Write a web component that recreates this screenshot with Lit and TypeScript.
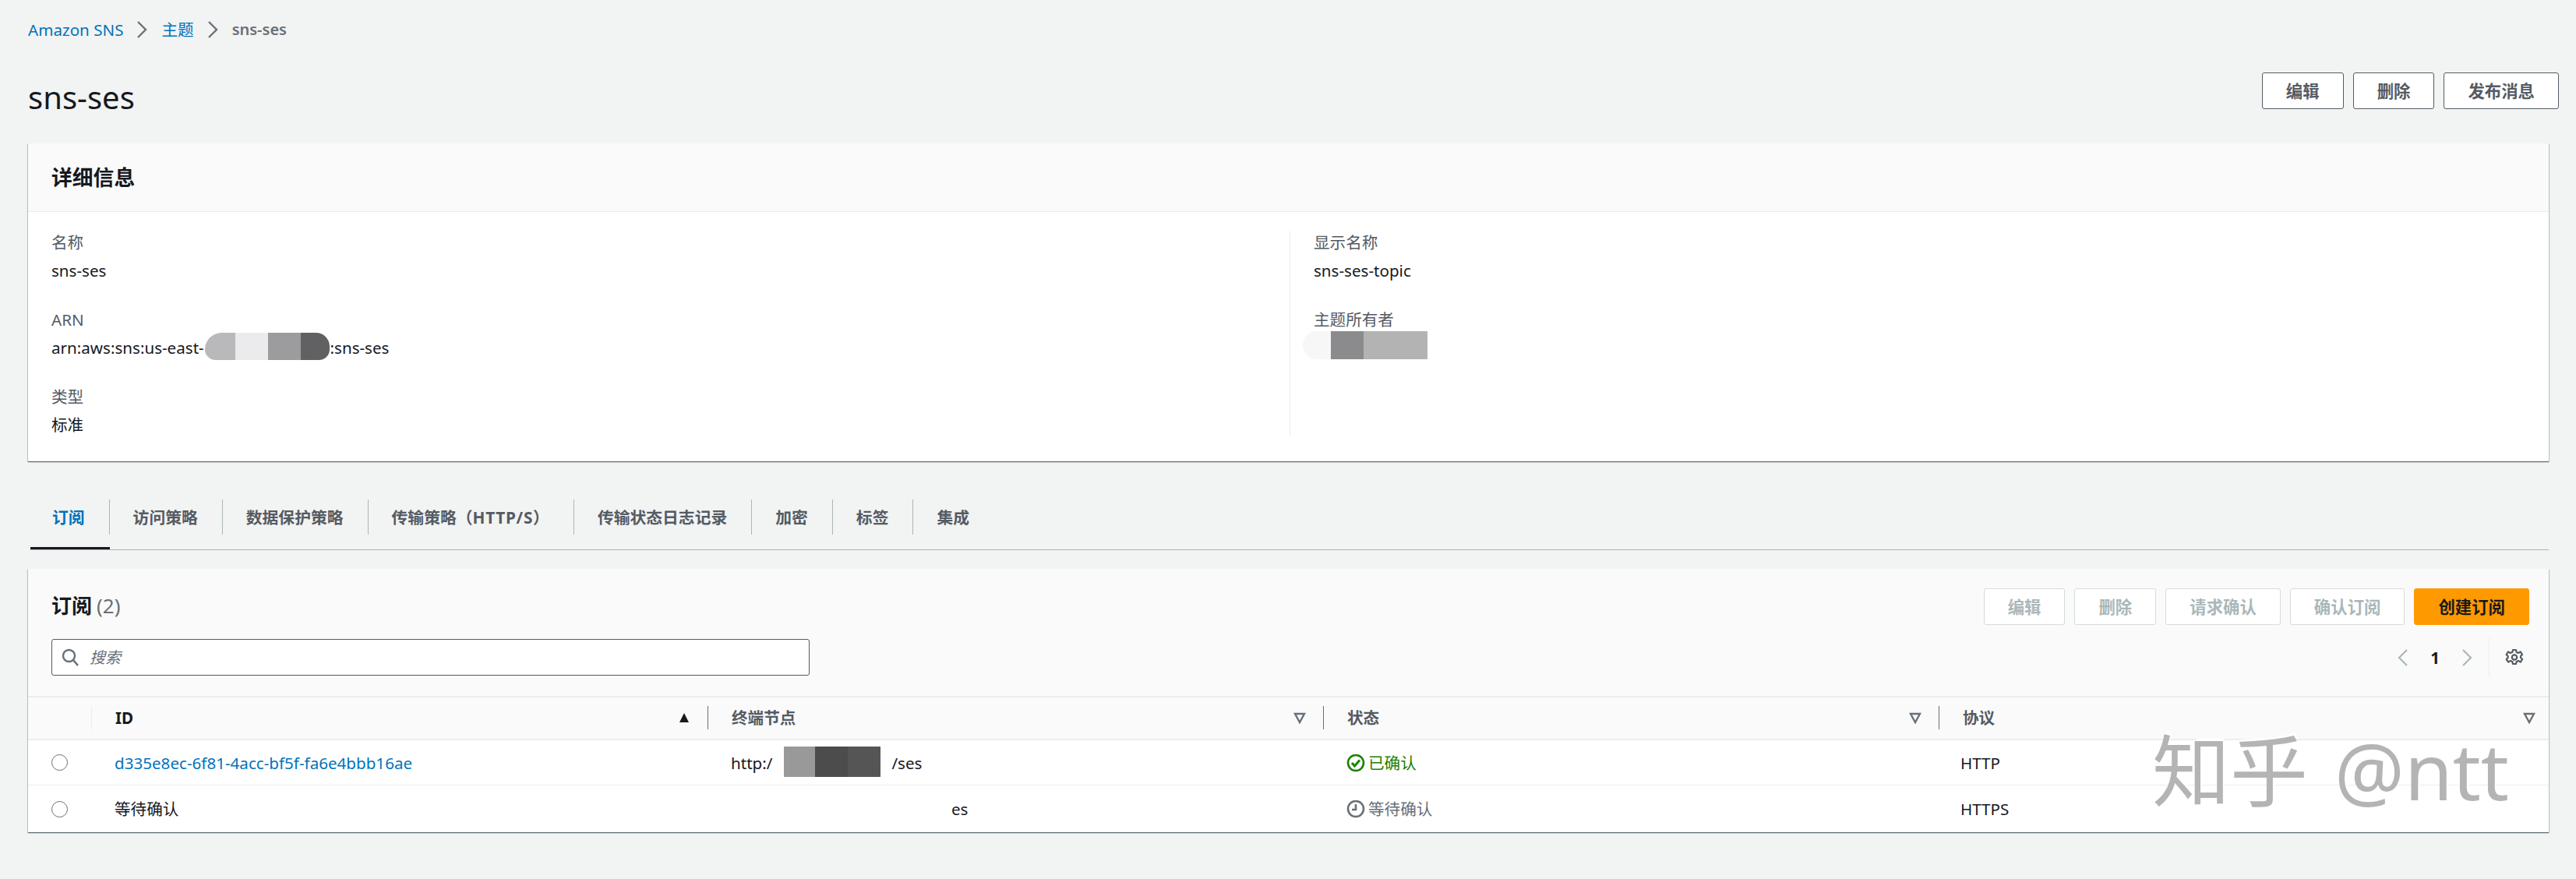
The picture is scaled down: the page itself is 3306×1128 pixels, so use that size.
import { LitElement, html, css, svg } from "lit";
import { customElement } from "lit/decorators.js";

const blobs = [
  { x: 263, y: 427, w: 160, h: 35, r: "22px 18px 14px 14px", segs: [["#b9b9bb", 39], ["#ebebed", 42], ["#9c9c9e", 42], ["#616163", 37]] },
  { x: 1672, y: 425, w: 160, h: 36, r: "20px 0 0 20px", segs: [["#f7f7f7", 36], ["#8b8b8d", 42], ["#b3b3b3", 82]] },
  { x: 1006, y: 958, w: 124, h: 39, r: "0", segs: [["#999999", 40], ["#4c4c4c", 42], ["#555555", 42]] },
];

const chevron = svg`<svg class="chev" viewBox="0 0 14 22" width="14" height="22"><path d="M2 1l10 10L2 21" fill="none" stroke="currentColor" stroke-width="2.4"/></svg>`;

@customElement("app-root")
export class AppRoot extends LitElement {
  static styles = css`
    :host {
      display: block; position: relative; width: 3306px; height: 1128px; overflow: hidden;
      background: #f2f3f3; color: #16191f;
      font: 20.6px/30px "Noto Sans", "Noto Sans CJK SC", sans-serif;
    }
    * { box-sizing: border-box; }
    .page { padding: 24px 22px 0 36px; }
    .crumbs { display: flex; align-items: center; height: 28px; color: #687078; }
    .crumbs a { color: #0073bb; }
    .crumbs .chev { margin: 0 18px 0 17px; color: #687078; }
    .crumbs .cur { font-weight: 600; font-size: 20px; }
    .head { display: flex; justify-content: space-between; align-items: flex-start; margin-top: 41px; height: 91px; }
    h1 { margin: 8px 0 0; font-size: 40px; line-height: 48px; font-weight: 400; }
    .btns { display: flex; gap: 12px; }
    .btn {
      height: 47px; padding: 0 30px; display: flex; align-items: center; border: 1px solid #545b64;
      border-radius: 3px; background: #fff; color: #545b64; font-weight: 700; font-size: 21.4px; white-space: nowrap;
    }
    .btn.off { border-color: #d5dbdb; color: #aab7b8; }
    .btn.primary { background: #ff9900; border-color: #ff9900; color: #16191f; }
    .card {
      margin-right: 13px; background: #fff;
      box-shadow: 0 1px 1px 0 rgba(0,28,36,.5), 1px 1px 1px 0 rgba(0,28,36,.15), -1px 1px 1px 0 rgba(0,28,36,.15);
    }
    .card-head {
      height: 88px; padding: 0 30px; display: flex; align-items: center; background: #fafafa;
      border-bottom: 1px solid #eaeded; font-size: 26.8px; font-weight: 700;
    }
    .details { display: grid; grid-template-columns: 1620px 1fr; padding: 24px 0 32px; }
    .col { padding: 0 30px; height: 264px; }
    .col.first { border-right: 1px solid #eaeded; }
    .field { height: 99px; }
    .lab { color: #545b64; height: 36px; }
    .val { height: 30px; white-space: nowrap; }
    .gap-arn { display: inline-block; width: 150px; }
    .tabs { display: flex; margin: 39px 13px 24px 3px; border-bottom: 1px solid #aab7b8; }
    .tab { padding-top: 10px; border-bottom: 3px solid transparent; font-weight: 700; font-size: 20.8px; color: #545b64; white-space: nowrap; }
    .tab.on { border-bottom-color: #16191f; color: #0073bb; }
    .tab > span { display: flex; align-items: center; height: 45px; padding: 0 31px 0 30px; border-right: 1px solid #aab7b8; margin-bottom: 16px; }
    .tab.on > span { padding-left: 28px; }
    .tab.last > span { border-right: 0; }
    .ls { letter-spacing: 0.7px; }
    .sub { background: #fafafa; padding-top: 25px; }
    .sub-top { display: flex; justify-content: space-between; align-items: center; padding: 0 25px 0 30px; }
    .sub-title { font-size: 26px; font-weight: 700; line-height: 46px; margin-top: -3px; }
    .sub-title i { font-style: normal; font-weight: 400; color: #687078; font-size: 26px; margin-left: 6px; }
    .tools { display: flex; justify-content: space-between; align-items: center; padding: 18px 25px 0 30px; height: 65px; margin-bottom: 26px; }
    .search {
      width: 973px; height: 47px; border: 1px solid #545b64; border-radius: 3px; background: #fff;
      display: flex; align-items: center; gap: 14px; padding-left: 12px; color: #687078; font-style: italic; font-size: 20px;
    }
    .pager { display: flex; align-items: center; height: 50px; color: #aab7b8; }
    .pager b { color: #16191f; font-weight: 700; margin: 0 28px; }
    .pager .gearbox { margin-left: 21px; padding: 0 7px 0 20px; border-left: 1px solid #eaeded; height: 50px; display: flex; align-items: center; color: #545b64; }
    .row { display: grid; grid-template-columns: 81px 791px 790px 790px 783px; }
    .row.th { height: 57px; background: #fafafa; border-top: 2px solid #eaeded; border-bottom: 2px solid #eaeded; font-weight: 700; color: #545b64; }
    .row.tr { background: #fff; height: 58px; border-bottom: 1px solid #eaeded; align-items: center; }
    .row.tr.end { height: 60px; border-bottom: 0; }
    .th > div { display: flex; align-items: center; justify-content: space-between; padding: 0 22px 0 30px; position: relative; }
    .th > div:last-child { padding-right: 17px; }
    .th > div.idc { color: #16191f; }
    .th > div:not(.blank) { border-left: 1px solid #687078; margin: 11px 0 12px; }
    .th > div.idc { border-left-color: #eaeded; }
    .tr > div { padding-left: 30px; white-space: nowrap; }
    .tr > div.proto { padding-left: 28px; }
    .tr > div.r { padding-left: 0; display: flex; justify-content: center; }
    .radio { width: 21px; height: 21px; border-radius: 50%; border: 1.5px solid #687078; background: #fff; }
    .link { color: #0073bb; }
    .gap-ep { display: inline-block; width: 153px; }
    .gap-ep2 { display: inline-block; width: 283px; }
    .st { display: flex; align-items: center; gap: 4px; }
    .st.ok { color: #1d8102; }
    .st.wait { color: #687078; }
    .blob { position: absolute; display: flex; overflow: hidden; }
    .mark {
      position: absolute; left: 2762px; top: 924px; font: 400 100px/128px "Noto Sans", "Noto Sans CJK SC", sans-serif;
      color: #b4b4b4; white-space: nowrap; text-shadow: 2px -3px 0 #fff; word-spacing: 8px;
    }
  `;

  render() {
    const filter = svg`<svg viewBox="0 0 16 16" width="16" height="16"><path d="M2 3h12L8 14z" fill="none" stroke="#687078" stroke-width="2.4"/></svg>`;
    const sort = svg`<svg viewBox="0 0 16 16" width="16" height="16"><path d="M8 2l6 12H2z" fill="#16191f"/></svg>`;
    const tabs = [html`订阅`, html`访问策略`, html`数据保护策略`, html`传输策略（<span class="ls">HTTP/S</span>）`, html`传输状态日志记录`, html`加密`, html`标签`, html`集成`];
    return html`
      <div class="page">
        <nav class="crumbs"><a>Amazon SNS</a>${chevron}<a>主题</a>${chevron}<span class="cur">sns-ses</span></nav>
        <div class="head">
          <h1>sns-ses</h1>
          <div class="btns"><div class="btn">编辑</div><div class="btn">删除</div><div class="btn">发布消息</div></div>
        </div>
        <section class="card">
          <div class="card-head">详细信息</div>
          <div class="details">
            <div class="col first">
              <div class="field"><div class="lab">名称</div><div class="val">sns-ses</div></div>
              <div class="field"><div class="lab">ARN</div><div class="val">arn:aws:sns:us-east-1<span class="gap-arn"></span>:sns-ses</div></div>
              <div class="field"><div class="lab">类型</div><div class="val">标准</div></div>
            </div>
            <div class="col">
              <div class="field"><div class="lab">显示名称</div><div class="val">sns-ses-topic</div></div>
              <div class="field"><div class="lab">主题所有者</div></div>
            </div>
          </div>
        </section>
        <div class="tabs">
          ${tabs.map((t, i) => html`<div class="tab ${i === 0 ? "on" : ""} ${i === 7 ? "last" : ""}"><span>${t}</span></div>`)}
        </div>
        <section class="card sub">
          <div class="sub-top">
            <div class="sub-title">订阅<i>(2)</i></div>
            <div class="btns">
              <div class="btn off">编辑</div><div class="btn off">删除</div><div class="btn off">请求确认</div><div class="btn off">确认订阅</div><div class="btn primary">创建订阅</div>
            </div>
          </div>
          <div class="tools">
            <div class="search">
              <svg viewBox="0 0 22 24" width="22" height="24"><circle cx="9.5" cy="9.5" r="7.5" fill="none" stroke="#687078" stroke-width="2.4"/><path d="M15 15l6 7" stroke="#687078" stroke-width="2.6"/></svg>
              <span>搜索</span>
            </div>
            <div class="pager">
              <svg viewBox="0 0 14 22" width="14" height="22"><path d="M12 1L2 11l10 10" fill="none" stroke="currentColor" stroke-width="2.2"/></svg>
              <b>1</b>
              <svg viewBox="0 0 14 22" width="14" height="22"><path d="M2 1l10 10L2 21" fill="none" stroke="currentColor" stroke-width="2.2"/></svg>
              <div class="gearbox">
                <svg viewBox="0 0 24 24" width="24" height="24"><path d="M10 2h4l.7 3 2.300 1 2.700-1.600 2.300 3.600-2 2 .1 2 2 2-2.300 3.600-2.800-1.600-2.300 1-.7 3h-4l-.7-3-2.300-1-2.800 1.600L1.700 14l2-2-.1-2-2-2L4 4.400 6.700 6l2.600-1z" fill="none" stroke="currentColor" stroke-width="2.2" stroke-linejoin="round"/><circle cx="12" cy="11.500" r="3.200" fill="none" stroke="currentColor" stroke-width="2.200"/></svg>
              </div>
            </div>
          </div>
          <div class="row th">
            <div class="blank"></div>
            <div class="idc"><span>ID</span>${sort}</div>
            <div><span>终端节点</span>${filter}</div>
            <div><span>状态</span>${filter}</div>
            <div><span>协议</span>${filter}</div>
          </div>
          <div class="row tr">
            <div class="r"><span class="radio"></span></div>
            <div><span class="link">d335e8ec-6f81-4acc-bf5f-fa6e4bbb16ae</span></div>
            <div>http:/<span class="gap-ep"></span>/ses</div>
            <div class="st ok">
              <svg viewBox="0 0 24 24" width="24" height="24"><circle cx="12" cy="12" r="10" fill="none" stroke="currentColor" stroke-width="2.600"/><path d="M7 12l3.500 4L17 8.500" fill="none" stroke="currentColor" stroke-width="3"/></svg>
              已确认
            </div>
            <div class="proto">HTTP</div>
          </div>
          <div class="row tr end">
            <div class="r"><span class="radio"></span></div>
            <div>等待确认</div>
            <div><span class="gap-ep2"></span>es</div>
            <div class="st wait">
              <svg viewBox="0 0 24 24" width="24" height="24"><circle cx="12" cy="12" r="10" fill="none" stroke="currentColor" stroke-width="2.600"/><path d="M12 6v7H7" fill="none" stroke="currentColor" stroke-width="2.600"/></svg>
              等待确认
            </div>
            <div class="proto">HTTPS</div>
          </div>
        </section>
      </div>
      ${blobs.map(
        (b) => html`<div class="blob" style="left:${b.x}px;top:${b.y}px;width:${b.w}px;height:${b.h}px;border-radius:${b.r}">
          ${b.segs.map((s) => html`<div style="background:${s[0]};width:${s[1]}px"></div>`)}
        </div>`
      )}
      <div class="mark">知乎 @ntt</div>
    `;
  }
}
